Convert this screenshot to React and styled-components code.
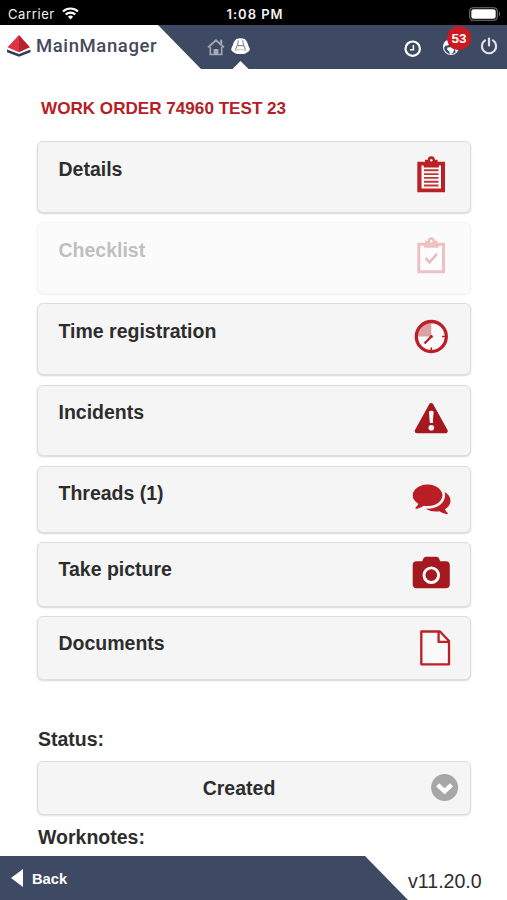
import React from "react";
import styled, { createGlobalStyle } from "styled-components";

const GlobalStyle = createGlobalStyle`
  * { box-sizing: border-box; }
  body {
    margin: 0;
    background: #ffffff;
    color: #2d2d2d;
    font-family: "Liberation Sans", Arial, sans-serif;
  }
  svg { display: block; flex: none; }
`;

const Screen = styled.div`
  display: flex;
  flex-direction: column;
  width: 507px;
  height: 900px;
  overflow: hidden;
`;

const StatusBar = styled.div`
  display: grid;
  grid-template-columns: 1fr auto 1fr;
  align-items: center;
  flex: none;
  height: 25px;
  padding: 2px 6px 0 8px;
  background: #000000;
  color: #f2f2f2;
  font-family: Inter, sans-serif;
  font-size: 13px;
`;

const Carrier = styled.div`
  display: flex;
  align-items: center;
  gap: 7px;
  letter-spacing: 0.6px;
`;

const Clock = styled.div`
  padding-left: 1px;
  font-weight: 600;
  letter-spacing: 0.95px;
`;

const BatterySlot = styled.div`
  justify-self: end;
`;

const Header = styled.header`
  display: flex;
  flex: none;
  height: 44px;
  background: #3e4963;
`;

const Brand = styled.div`
  display: flex;
  gap: 5px;
  width: 202px;
  padding: 10px 0 0 7px;
  background: #ffffff;
  clip-path: polygon(0 0, 158px 0, 201px 100%, 0 100%);
`;

const BrandName = styled.span`
  color: #454b5b;
  font-family: Roboto, sans-serif;
  font-size: 18.5px;
  font-weight: 500;
  line-height: 22px;
  letter-spacing: 0.6px;
`;

const Nav = styled.nav`
  display: flex;
  flex: 1;
  gap: 6px;
  padding-left: 4px;
`;

const NavItem = styled.div`
  display: flex;
  flex-direction: column;
  align-items: center;
  justify-content: space-between;
  width: 19px;
  padding-top: 13px;
`;

const Notch = styled.div`
  width: 16px;
  height: 8px;
  background: #ffffff;
  clip-path: polygon(50% 0, 100% 100%, 0 100%);
`;

const Tools = styled.div`
  display: flex;
  align-items: flex-start;
  gap: 20px;
  padding: 12px 9px 0 0;
`;

const Tool = styled.div`
  position: relative;
  padding-top: ${(props) => props.$drop || 0}px;
`;

const Badge = styled.span`
  position: absolute;
  top: -11px;
  left: 5px;
  width: 24px;
  height: 24px;
  border-radius: 50%;
  background: #cb1a20;
  color: #ffffff;
  font-size: 13.5px;
  font-weight: 700;
  line-height: 25px;
  text-align: center;
`;

const Content = styled.main`
  display: flex;
  flex-direction: column;
  flex: 1;
  min-height: 0;
  padding: 0 36px 0 37px;
`;

const Title = styled.h1`
  margin: 0;
  padding: 30px 0 22px 4px;
  color: #b52026;
  font-size: 17.1px;
  line-height: 20px;
  white-space: nowrap;
`;

const CardList = styled.div`
  display: flex;
  flex-direction: column;
`;

const Card = styled.div`
  display: flex;
  justify-content: space-between;
  align-items: flex-start;
  height: ${(props) => props.$height}px;
  margin-bottom: ${(props) => props.$gap}px;
  padding: 13px 19px 0 20px;
  border: 1px solid #dddddd;
  border-radius: 6px;
  background: #f5f5f5;
  box-shadow: 0 1px 2px rgba(0, 0, 0, 0.16);
  opacity: ${(props) => (props.$disabled ? 0.3 : 1)};
`;

const CardLabel = styled.span`
  padding: ${(props) => props.$drop}px 0 0 0.5px;
  font-size: 19.5px;
  font-weight: 700;
  line-height: 24px;
`;

const FieldLabel = styled.div`
  padding-left: 1px;
  font-size: 19.5px;
  font-weight: 700;
  line-height: 24px;
`;

const Select = styled.div`
  display: grid;
  grid-template-columns: 28px 1fr 28px;
  align-items: center;
  height: 54px;
  margin: 10px 0;
  padding: 0 11px;
  border: 1px solid #dddddd;
  border-radius: 6px;
  background: #f5f5f5;
  box-shadow: 0 1px 2px rgba(0, 0, 0, 0.12);
  font-size: 19.5px;
  font-weight: 700;
  text-align: center;
`;

const Value = styled.span`
  padding-right: 30px;
  text-align: center;
`;

const StatusField = styled.div`
  padding-top: 47px;
`;

const Footer = styled.footer`
  display: flex;
  align-items: center;
  flex: none;
  height: 44px;
`;

const Back = styled.div`
  display: flex;
  align-items: center;
  gap: 9px;
  width: 408px;
  height: 44px;
  padding: 1px 0 2px 11px;
  background: #3e4963;
  clip-path: polygon(0 0, 365px 0, 100% 100%, 0 100%);
  color: #ffffff;
  font-size: 14.7px;
  font-weight: 700;
`;

const BackLabel = styled.span`
  padding-top: 2px;
`;

const Version = styled.span`
  padding-top: 6px;
  font-size: 19.6px;
`;

const WifiIcon = () => (
  <svg width="17" height="13" viewBox="0 0 17 13" fill="none" stroke="#fff" strokeWidth="2.1">
    <path d="M1 4.5a10.8 10.8 0 0 1 15 0" />
    <path d="M3.7 7.5a7 7 0 0 1 9.6 0" />
    <path d="M8.5 12.4 5.9 9.7a3.8 3.8 0 0 1 5.2 0Z" fill="#fff" stroke="none" />
  </svg>
);

const BatteryIcon = () => (
  <svg width="32" height="14" viewBox="0 0 32 14">
    <rect x="0.7" y="0.7" width="27.6" height="12.6" rx="3.6" fill="none" stroke="#777" strokeWidth="1.1" />
    <rect x="2.3" y="2.3" width="24.4" height="9.4" rx="2.2" fill="#fff" />
    <path d="M30 4.6c1.4.8 1.4 4 0 4.8Z" fill="#777" />
  </svg>
);

const LogoIcon = () => (
  <svg width="24" height="22" viewBox="0 0 24 22">
    <path d="M0 14.6 12 19 23.5 14.6v2.6L12 21.7 0 17.2Z" fill="#313c57" />
    <path d="M12 0 .5 12.2 12 17.2Z" fill="#dc3440" />
    <path d="M12 0 23 12.2 12 17.2Z" fill="#b7212e" />
  </svg>
);

const HomeIcon = () => (
  <svg width="18" height="18" viewBox="0 0 18 18" fill="none" stroke="#a4a9b5">
    <path d="M1 9.4 9 2.2l8 7.2" strokeWidth="1.9" />
    <path d="M3.3 9v7.5h11.4V9" strokeWidth="1.6" />
    <path d="M14.2 6V1.6" strokeWidth="2" />
    <path d="M6.6 16.8V11h4.8v5.8Z" fill="#a4a9b5" stroke="none" />
  </svg>
);

const HelmetIcon = () => (
  <svg width="19" height="17" viewBox="0 0 19 17">
    <path
      d="M5.2 1Q9.500-.5 13.800 1q2.700 2.500 3.500 6.500l1.400 3q.4 2.500-1.500 3.300l-2.700 1.800q-5 1-10 0l-2.700-1.800Q-.1 13 .3 10.500l1.400-3Q2.500 3.500 5.200 1Z"
      fill="#fff"
    />
    <path d="M7.300 2.300 6.800 6 4.500 11.800M11.700 2.300l.5 3.700 2.300 5.800M6.800 7.600h5.400" fill="none" stroke="#858c9c" strokeWidth="1.1" />
    <path d="M3.500 12.500q6-2.500 12 0" fill="none" stroke="#b3b8c2" strokeWidth="0.9" />
  </svg>
);

const TimeIcon = () => (
  <svg width="18" height="18" viewBox="0 0 18 18" fill="none" stroke="#fff">
    <circle cx="8.7" cy="8.7" r="7.2" strokeWidth="2.2" />
    <path d="M9.4 5v4.800H6" strokeWidth="1.5" />
  </svg>
);

const GlobeIcon = () => (
  <svg width="18" height="18" viewBox="0 0 18 18">
    <circle cx="9" cy="9" r="7.5" fill="#3e4963" stroke="#e8e9ed" strokeWidth="1.2" />
    <path d="M3.2 3.6 7.2 2l1.6 2.2-2.6 3-2.7.6-1.800 2q-.5-3.7 1.500-6.200Z" fill="#fff" />
    <path d="m5.500 9.500 3.300-.3 3.500 2.300-1.300 3.300-2.500 1.800L7 13.200l-2-1.800Z" fill="#fff" />
    <path d="m12.500 9 4-.5q.2 3.500-2.700 6l-.8-2.500Z" fill="#fff" />
  </svg>
);

const PowerIcon = () => (
  <svg width="18" height="18" viewBox="0 0 18 18" fill="none" stroke="#dfe1e6" strokeWidth="2.2" strokeLinecap="round">
    <path d="M9 1.500v7" />
    <path d="M5 3.300a7.100 7.100 0 1 0 8 0" />
  </svg>
);

const ClipboardIcon = ({ checked }) => (
  <svg width="40" height="40" viewBox="0 0 40 40">
    <path
      d="M6.300 6.800h7.700V4.800h2.800a3.400 3.400 0 0 1 7 0h2.800v2h7.400V37.300H6.300Z"
      fill={checked ? "#c9333a" : "#bb2026"}
    />
    <circle cx="20.300" cy="5.300" r="1.200" fill="#f5f5f5" />
    {checked ? (
      <>
        <path d="M9.300 9.800h3.700v2h14.600v-2h3.400v24.500H9.300Z" fill="#fafafa" />
        <path d="m14.500 22.200 4 4.200 7.500-8.500" fill="none" stroke="#bb2026" strokeWidth="2.500" />
      </>
    ) : (
      <>
        <path d="M10.500 10.500h2.300v2h15v-2h2.200v23H10.500Z" fill="#fafafa" />
        <path d="M13 15.300h14.500M13 19.100h14.500M13 22.900h14.500M13 26.700h14.500M13 30.500h14.500" stroke="#c1363b" strokeWidth="1.900" />
      </>
    )}
  </svg>
);

const TimeRegistrationIcon = () => (
  <svg width="40" height="40" viewBox="0 0 40 40">
    <circle cx="20.300" cy="19.500" r="15.200" fill="#fafafa" />
    <path d="M20.300 19.500H5.100A15.200 15.200 0 0 1 20.300 4.300Z" fill="#dca0a5" />
    <path d="M20.300 30.500v3M31 19.500h3" stroke="#bb2026" strokeWidth="1.500" />
    <circle cx="20.300" cy="19.500" r="15" fill="none" stroke="#bb2026" strokeWidth="3.300" />
    <path d="m20.800 19-7.300 7.500" stroke="#b52026" strokeWidth="2.300" />
    <circle cx="20.300" cy="19.500" r="1.600" fill="#b52026" />
  </svg>
);

const IncidentIcon = () => (
  <svg width="40" height="40" viewBox="0 0 40 40">
    <path d="M20.200 6.300 34.500 32h-28.500Z" fill="#a5181e" stroke="#a5181e" strokeWidth="4.600" strokeLinejoin="round" />
    <path d="M18 12.500q2.300-1.600 4.600 0l-.8 11.500h-3Z" fill="#fff" />
    <circle cx="20.300" cy="28.800" r="2.800" fill="#fff" />
  </svg>
);

const ThreadsIcon = () => (
  <svg width="40" height="40" viewBox="0 0 40 40">
    <path
      transform="translate(1.700 -0.900) scale(0.0211)"
      fill="#b91e24"
      d="M1408 768q0 139-94 257t-256.500 186.500-353.500 68.500q-86 0-176-16-124 88-278 128-36 9-86 16h-3q-11 0-20.500-8t-11.500-21q-1-3-1-6.500t.5-6.500 2-6l2.500-5 3.500-5.500 4-5 4.500-5 4-4.500q5-6 23-25t26-29.500 22.500-29 25-38.500 20.500-44q-124-72-195-177t-71-224q0-139 94-257t256.500-186.500 353.500-68.500 353.500 68.500 256.500 186.500 94 257zm384 256q0 120-71 224.500t-195 176.500q10 24 20.500 44t25 38.500 22.500 29 26 29.500 23 25q1 1 4 4.500t4.500 5 4 5 3.500 5.500l2.500 5 2 6 .5 6.500-1 6.500q-3 14-13 22t-22 7q-50-7-86-16-154-40-278-128-90 16-176 16-271 0-472-132 58 4 88 4 161 0 309-45t264-129q125-92 192-212t67-254q0-77-23-152 129 71 204 178t75 230z"
    />
  </svg>
);

const CameraIcon = () => (
  <svg width="40" height="40" viewBox="0 0 40 40">
    <path
      d="M5.700 5.200h5.500l1.200-2.800Q13.300.7 15 .7h10.500q1.700 0 2.500 1.700l1.200 2.800h5.600q4 0 4 4v19q0 4-4 4H5.700q-4 0-4-4v-19q0-4 4-4Z"
      fill="#a5181e"
    />
    <circle cx="20.300" cy="19.200" r="7.300" fill="none" stroke="#fff" strokeWidth="2.900" />
  </svg>
);

const DocumentIcon = () => (
  <svg width="40" height="40" viewBox="0 0 40 40" fill="#fafafa" stroke="#bb2026" strokeWidth="2.300" strokeLinejoin="round">
    <path d="M10.300 1.500H29L38 11v23.300H10.300Z" />
    <path d="M27.600 2v9.900h10.400" fill="none" />
  </svg>
);

const ChevronIcon = () => (
  <svg width="28" height="28" viewBox="0 0 28 28">
    <circle cx="13.600" cy="13.500" r="13.500" fill="#a7a7a7" />
    <path d="m6.700 10.800 6.900 6.500 6.900-6.500" fill="none" stroke="#fff" strokeWidth="4.400" />
  </svg>
);

const BackIcon = () => (
  <svg width="12" height="18" viewBox="0 0 12 18">
    <path d="M0 9 12 0v18Z" fill="#fff" />
  </svg>
);

const items = [
  { label: "Details", icon: <ClipboardIcon />, height: 72, gap: 9, drop: 2 },
  { label: "Checklist", icon: <ClipboardIcon checked />, height: 72, gap: 9, drop: 2, disabled: true },
  { label: "Time registration", icon: <TimeRegistrationIcon />, height: 72, gap: 9.5, drop: 2 },
  { label: "Incidents", icon: <IncidentIcon />, height: 71.5, gap: 10, drop: 1.5 },
  { label: "Threads (1)", icon: <ThreadsIcon />, height: 66.5, gap: 9.5, drop: 1 },
  { label: "Take picture", icon: <CameraIcon />, height: 64.5, gap: 9.5, drop: 1 },
  { label: "Documents", icon: <DocumentIcon />, height: 64, gap: 0, drop: 1 },
];

export default function App() {
  return (
    <Screen>
      <GlobalStyle />
      <StatusBar>
        <Carrier>
          Carrier
          <WifiIcon />
        </Carrier>
        <Clock>1:08 PM</Clock>
        <BatterySlot>
          <BatteryIcon />
        </BatterySlot>
      </StatusBar>
      <Header>
        <Brand>
          <LogoIcon />
          <BrandName>MainManager</BrandName>
        </Brand>
        <Nav>
          <NavItem>
            <HomeIcon />
          </NavItem>
          <NavItem>
            <HelmetIcon />
            <Notch />
          </NavItem>
        </Nav>
        <Tools>
          <Tool $drop={3}>
            <TimeIcon />
          </Tool>
          <Tool $drop={1}>
            <GlobeIcon />
            <Badge>53</Badge>
          </Tool>
          <Tool>
            <PowerIcon />
          </Tool>
        </Tools>
      </Header>
      <Content>
        <Title>WORK ORDER 74960 TEST 23</Title>
        <CardList>
          {items.map((item) => (
            <Card key={item.label} $height={item.height} $gap={item.gap} $disabled={item.disabled}>
              <CardLabel $drop={item.drop}>{item.label}</CardLabel>
              {item.icon}
            </Card>
          ))}
        </CardList>
        <StatusField>
          <FieldLabel>Status:</FieldLabel>
          <Select>
            <span />
            <Value>Created</Value>
            <ChevronIcon />
          </Select>
        </StatusField>
        <FieldLabel>Worknotes:</FieldLabel>
      </Content>
      <Footer>
        <Back>
          <BackIcon />
          <BackLabel>Back</BackLabel>
        </Back>
        <Version>v11.20.0</Version>
      </Footer>
    </Screen>
  );
}
